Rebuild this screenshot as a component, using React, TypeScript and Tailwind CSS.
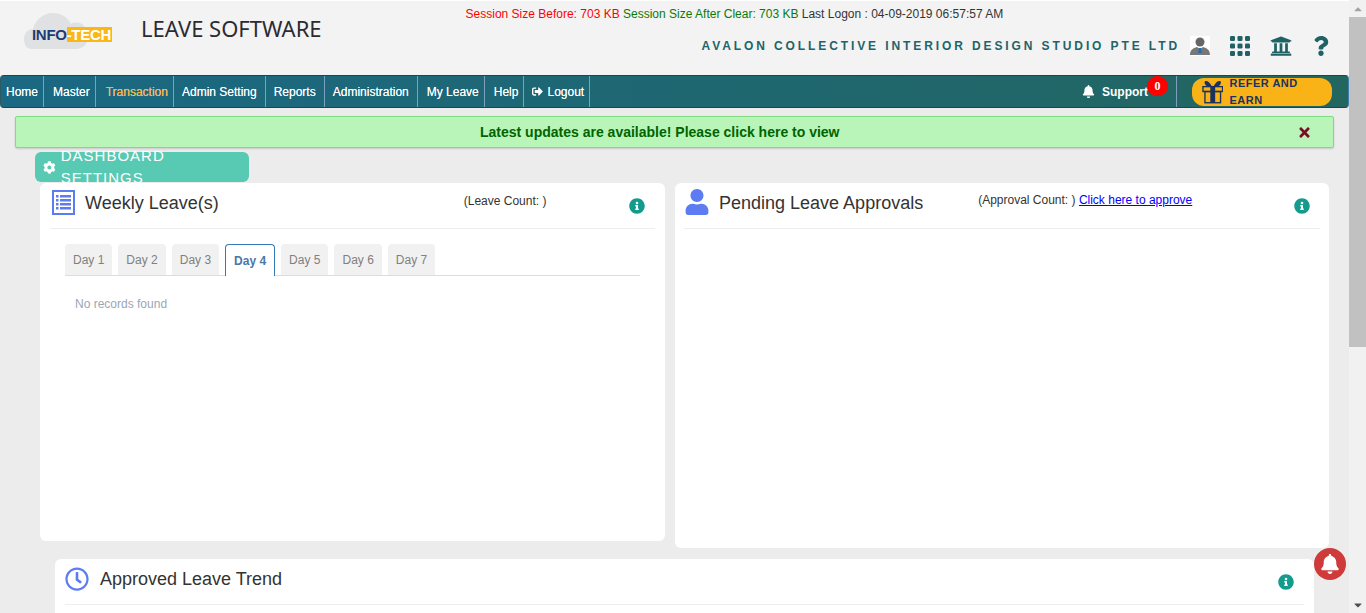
import React from "react";
import { FaBell, FaCog, FaInfoCircle, FaQuestion, FaRegClock, FaSignOutAlt, FaTimes, FaUniversity, FaUser, FaCaretUp, FaCaretDown } from "react-icons/fa";

const navItems = ["Home", "Master", "Transaction", "Admin Setting", "Reports", "Administration", "My Leave", "Help"];
const navClass = "flex h-full items-center border-r border-[#7f9fc0] px-[6px] text-[12px] leading-none [text-shadow:0_0_0.6px_rgba(255,255,255,0.8)]";
const days = ["Day 1", "Day 2", "Day 3", "Day 4", "Day 5", "Day 6", "Day 7"];

function Logo() {
  return (
    <div className="relative h-[50px] w-[100px] shrink-0">
      <svg width="72" height="38" viewBox="0 0 72 38" className="absolute left-0 top-[11px]">
        <path d="M8 37C2 37 0 32 0 27c0-6 4-10 9-10 2-9 10-16 20-16 9 0 15 5 18 11 3-2 9-2 12 1 5 4 5 10 5 12 0 7-5 12-12 12Z" fill="#e0e1e3" />
      </svg>
      <div className="absolute left-[8px] top-[26px] flex h-[15px] items-center text-[15px] font-bold leading-none tracking-[-0.3px]">
        <span className="text-[#1b3d73]">INFO</span>
        <span className="flex h-[15px] items-center bg-[#fbb715] pr-[1px] text-white">-TECH</span>
      </div>
    </div>
  );
}

function ExecIcon() {
  return (
    <svg width="20" height="20" viewBox="0 0 20 20">
      <rect width="20" height="20" fill="#fff" />
      <circle cx="10" cy="6" r="4.5" fill="#666" />
      <path d="M0 19c0-5 3-7 7-8l3 2 3-2c4 1 7 3 7 8Z" fill="#777" />
      <path d="M9 12h2l1 5h-4Z" fill="#1f6fb5" />
    </svg>
  );
}

function GridIcon() {
  return (
    <svg width="20" height="20" viewBox="0 0 20 20" fill="#1f6266">
      {[0, 7.5, 15].flatMap((y) =>
        [0, 7.5, 15].map((x) => <rect key={`${x}-${y}`} x={x} y={y} width="5" height="5" rx="1.3" />)
      )}
    </svg>
  );
}

function GiftIcon() {
  return (
    <svg width="22" height="24" viewBox="0 0 22 24" fill="none">
      <path d="M10 6C8 2 5 0 3 1c-1 1 0 4 2 5ZM12 6c2-4 5-6 7-5 1 1 0 4-2 5Z" fill="#1b3260" />
      <rect x="1" y="6.5" width="20" height="5" stroke="#1b3260" strokeWidth="1.4" />
      <rect x="3" y="11.5" width="16" height="11.5" stroke="#1b3260" strokeWidth="1.4" />
      <rect x="8.5" y="6.5" width="5" height="16.5" fill="#1b3260" />
    </svg>
  );
}

function ListIcon() {
  return (
    <svg width="23" height="25" viewBox="0 0 23 25">
      <rect x="0" y="0" width="23" height="25" fill="#5d7cf3" />
      <rect x="2" y="2" width="19" height="21" fill="#fff" />
      {[5, 9, 13, 17].map((y) => (
        <g key={y} fill="#5d7cf3">
          <rect x="4" y={y} width="2.5" height="2.5" />
          <rect x="8" y={y} width="11" height="2.5" />
        </g>
      ))}
    </svg>
  );
}

function Info() {
  return <FaInfoCircle className="text-[#159a8e]" size={16} />;
}

export default function App() {
  return (
    <div className="flex h-[613px] w-[1366px] overflow-hidden bg-[#ececec] font-['Liberation_Sans',Arial,sans-serif] text-[#333]">
      <div className="relative w-[1349px] shrink-0">
        <header className="flex h-[75px] border-t border-white bg-[#f3f3f3]">
          <div className="ml-[24px] pt-[0px]"><Logo /></div>
          <div className="ml-[17px] pt-[12px] font-['Noto_Sans',sans-serif] text-[22px] leading-[30px] text-[#2b2b33]">LEAVE SOFTWARE</div>
          <div className="flex flex-1 flex-col">
            <div className="ml-[144px] mt-[6px] h-[14px] text-[12px] leading-[14px]">
              <span className="text-[#ff0000]">Session Size Before: 703 KB </span>
              <span className="text-[#0a7a0a]">Session Size After Clear: 703 KB </span>
              <span className="text-[#333]">Last Logon : 04-09-2019 06:57:57 AM</span>
            </div>
            <div className="mt-[14px] flex items-center justify-end pr-[18px]">
              <span className="mr-[10px] text-[12px] font-bold tracking-[2.9px] text-[#20646a]">AVALON COLLECTIVE INTERIOR DESIGN STUDIO PTE LTD</span>
              <ExecIcon />
              <span className="ml-[20px]"><GridIcon /></span>
              <span className="ml-[20px]"><FaUniversity size={22} className="text-[#1f6266]" /></span>
              <span className="ml-[19px]"><FaQuestion size={20} className="text-[#1f6266]" /></span>
            </div>
          </div>
        </header>

        <nav className="flex h-[33px] items-center rounded-[4px] border-y border-l border-r border-y-[#2f3e46] border-l-[#2b5a62] border-r-[#3f7fb0] bg-gradient-to-r from-[#1a6883] to-[#236660] text-white">
          {navItems.map((n) => (
            <a key={n} className={`${navClass} ${n === "Transaction" ? "pl-[10px] pr-[5px] text-[#fbb034]" : ""} ${n === "Home" ? "pl-[5px] pr-[5px]" : ""} ${n === "Master" ? "pl-[9px] pr-[5px]" : ""} ${n === "Admin Setting" || n === "Reports" || n === "Administration" ? "px-[8px]" : ""} ${n === "My Leave" ? "pl-[9px] pr-[5px]" : ""} ${n === "Help" ? "pl-[9px] pr-[5px]" : ""}`}>{n}</a>
          ))}
          <a className={`${navClass} gap-[4px] pl-[8px] pr-[5px]`}><FaSignOutAlt size={11} />Logout</a>
          <div className="relative ml-auto flex h-full items-center">
            <FaBell size={13} className="mr-[7px]" />
            <span className="mr-[28px] text-[12px] font-bold">Support</span>
            <span className="absolute left-[65px] top-0 flex h-[20px] w-[21px] items-center justify-center rounded-full bg-[#ff0000] font-['Liberation_Serif',serif] text-[12px] font-bold leading-none">0</span>
            <div className="flex h-full items-center border-l border-[#7f9fc0] pl-[15px] pr-[16px]">
              <div className="flex h-[28px] w-[140px] items-center gap-[6px] rounded-[12px] bg-[#f9b316] pl-[10px]">
                <GiftIcon />
                <span className="text-[11px] font-bold tracking-[0.5px] text-[#1b3260]">REFER AND EARN</span>
              </div>
            </div>
          </div>
        </nav>

        <div className="ml-[15px] mt-[8px] flex h-[32px] w-[1319px] items-center rounded-[2px] border border-[#7fdc7f] bg-[#b9f5b9] shadow-[0_1px_2px_rgba(0,0,0,0.15)]">
          <span className="ml-[464px] flex-1 text-[14px] font-bold text-[#006400]">Latest updates are available! Please click here to view</span>
          <FaTimes size={15} className="mr-[21px] text-[#7c0d28]" />
        </div>

        <div className="ml-[35px] mt-[4px] flex h-[30px] w-[214px] items-center gap-[5px] rounded-[6px] bg-[#58c9b2] pl-[8px] text-[15px] tracking-[1px] text-white">
          <FaCog size={13} />
          <span>DASHBOARD SETTINGS</span>
        </div>

        <div className="ml-[40px] mt-[1px] flex items-start gap-[10px]">
          <section className="h-[358px] w-[625px] rounded-[6px] bg-white px-[10px]">
            <div className="flex h-[46px] items-start border-b border-[#eeeeee]">
              <span className="ml-[2px] mt-[7px]"><ListIcon /></span>
              <h2 className="ml-[10px] mt-[9px] text-[18px] leading-[22px]">Weekly Leave(s)</h2>
              <span className="ml-[245px] mt-[11px] text-[12px] leading-[14px]">(Leave Count: )</span>
              <span className="ml-auto mr-[10px] mt-[15px]"><Info /></span>
            </div>
            <div className="ml-[15px] mr-[15px] mt-[15px] flex h-[32px] gap-[6px] border-b border-[#dddddd]">
              {days.map((d) => (
                <div
                  key={d}
                  className={
                    d === "Day 4"
                      ? "flex h-[32px] items-center rounded-t-[4px] border border-b-0 border-[#337ab7] bg-white px-[8px] text-[12px] font-bold text-[#4a76a8]"
                      : "flex h-[32px] items-center rounded-t-[4px] border-b border-[#dddddd] bg-[#f1f1f1] px-[8px] text-[12px] text-[#808080]"
                  }
                >
                  {d}
                </div>
              ))}
            </div>
            <p className="ml-[25px] mt-[21px] text-[12px] leading-[14px] text-[#9aa7b5]">No records found</p>
          </section>

          <section className="h-[365px] w-[654px] rounded-[6px] bg-white px-[9px]">
            <div className="flex h-[46px] items-start border-b border-[#eeeeee]">
              <span className="mt-[6px]"><FaUser size={26} className="text-[#5d7cf3]" /></span>
              <h2 className="ml-[9px] mt-[9px] text-[18px] leading-[22px]">Pending Leave Approvals</h2>
              <span className="ml-[55px] mt-[10px] text-[12px] leading-[14px]">(Approval Count: ) <a className="text-[#0000ff] underline">Click here to approve</a></span>
              <span className="ml-auto mr-[10px] mt-[15px]"><Info /></span>
            </div>
          </section>
        </div>

        <section className="ml-[55px] mt-[11px] h-[100px] w-[1259px] rounded-[6px] bg-white px-[10px]">
          <div className="flex h-[46px] items-start border-b border-[#eeeeee]">
            <span className="mt-[8px]"><FaRegClock size={24} className="text-[#5d7cf3]" /></span>
            <h2 className="ml-[11px] mt-[9px] text-[18px] leading-[22px]">Approved Leave Trend</h2>
            <span className="ml-auto mr-[10px] mt-[15px]"><Info /></span>
          </div>
        </section>

        <div className="absolute left-[1314px] top-[548px] flex h-[32px] w-[32px] items-center justify-center rounded-full bg-[#cf3a3a] text-white">
          <FaBell size={20} />
        </div>
      </div>

      <div className="flex w-[17px] shrink-0 flex-col bg-[#f1f1f1]">
        <div className="flex h-[17px] items-center justify-center text-[#a3a3a3]"><FaCaretUp size={12} /></div>
        <div className="h-[330px] bg-[#c1c1c1]" />
        <div className="flex-1" />
        <div className="flex h-[17px] items-center justify-center text-[#505050]"><FaCaretDown size={12} /></div>
      </div>
    </div>
  );
}
